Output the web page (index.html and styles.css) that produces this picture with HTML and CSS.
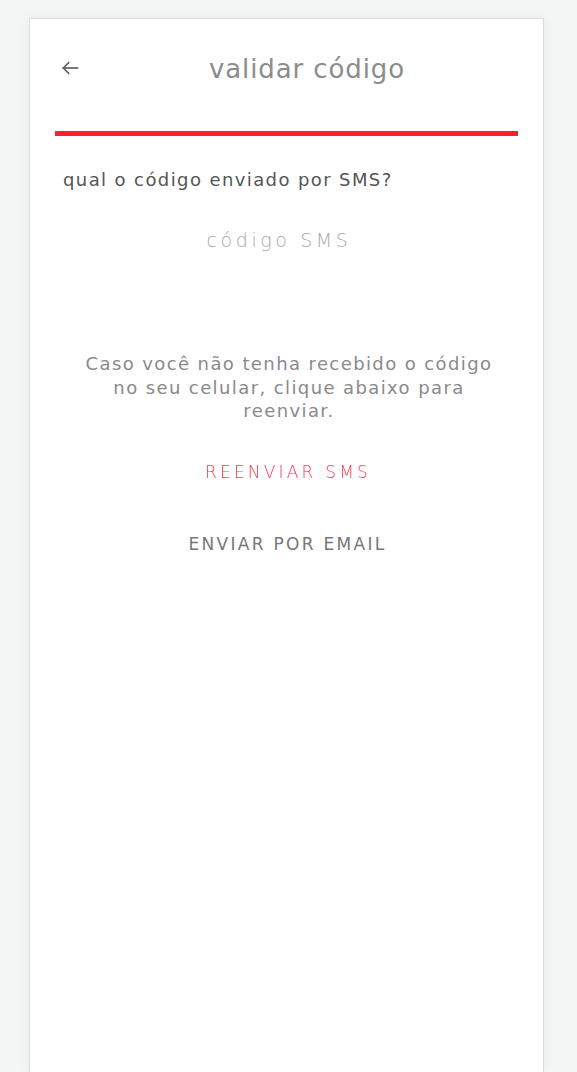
FILE: index.html
```html
<!DOCTYPE html>
<html lang="pt">
<head>
<meta charset="utf-8">
<link rel="stylesheet" href="styles.css">
</head>
<body>
<div class="page">
  <main class="card">
    <header class="header">
      <button class="back" aria-label="voltar">
        <svg width="20" height="20" viewBox="0 0 24 24" fill="none" stroke="#5f5f5f" stroke-width="2" stroke-linecap="square">
          <path d="M21 12H4"/>
          <path d="M11 5L4 12L11 19" stroke-linecap="butt"/>
        </svg>
      </button>
      <h1 class="title">validar código</h1>
    </header>
    <div class="progress"></div>
    <p class="question">qual o código enviado por SMS?</p>
    <input class="code" type="text" placeholder="código SMS">
    <p class="info">Caso você não tenha recebido o código no seu celular, clique abaixo para reenviar.</p>
    <button class="resend"><span>REENVIAR SMS</span></button>
    <button class="email">ENVIAR POR EMAIL</button>
  </main>
</div>
</body>
</html>
```
FILE: styles.css
```css
html, body {
  margin: 0;
  padding: 0;
  height: 100%;
}
body {
  background: #f4f5f5;
  font-family: "DejaVu Sans", sans-serif;
}
.page {
  display: flex;
  justify-content: center;
  padding-top: 18px;
  min-height: 100%;
  box-sizing: border-box;
}
.card {
  width: 515px;
  margin-left: -4px;
  background: #fff;
  border: 1px solid #dcdcdc;
  border-bottom: none;
  box-shadow: 0 0 12px rgba(0,0,0,0.05);
  box-sizing: border-box;
  padding: 0 25px;
  display: flex;
  flex-direction: column;
  align-items: center;
  min-height: 1054px;
}
.header {
  align-self: stretch;
  display: flex;
  align-items: center;
  height: 100px;
}
.back {
  width: 36px;
  height: 40px;
  padding: 0;
  margin-left: 5px;
  border: none;
  background: none;
  display: flex;
  align-items: center;
  justify-content: flex-start;
  margin-top: -2px;
}
.title {
  flex: 1;
  margin: 0;
  text-align: center;
  font-weight: 400;
  font-size: 26px;
  color: #8c8c8c;
  letter-spacing: 0.9px;
}
.progress {
  align-self: stretch;
  height: 5px;
  background: #ff1f2e;
  margin-top: 12px;
}
.question {
  align-self: stretch;
  margin: 32px 0 0 8px;
  font-size: 18px;
  letter-spacing: 1.4px;
  line-height: 24px;
  color: #555;
}
.code {
  margin: 35px 18px 0 0;
  width: 320px;
  border: none;
  outline: none;
  text-align: center;
  font-family: inherit;
  font-size: 19px;
  font-weight: 300;
  letter-spacing: 3.6px;
  text-indent: 3px;
  color: #555;
  padding: 0;
  height: 26px;
}
.code::placeholder {
  color: #a8a8a8;
}
.info {
  margin: 99px 0 0 5px;
  width: 415px;
  text-align: center;
  font-size: 18px;
  letter-spacing: 1.4px;
  line-height: 23.5px;
  color: #8a8a8a;
}
.resend, .email {
  border: none;
  background: none;
  font-family: inherit;
  padding: 0;
}
.resend {
  margin-top: 39px;
  font-size: 17px;
  font-weight: 300;
  letter-spacing: 3.2px;
  text-indent: 3px;
}
.resend span {
  background: linear-gradient(90deg, #ff3338, #ff2a55 50%, #ff3a48);
  -webkit-background-clip: text;
  background-clip: text;
  color: transparent;
}
.email {
  margin-top: 52px;
  font-size: 17px;
  color: #777;
  letter-spacing: 2.3px;
  text-indent: 2px;
}
```
